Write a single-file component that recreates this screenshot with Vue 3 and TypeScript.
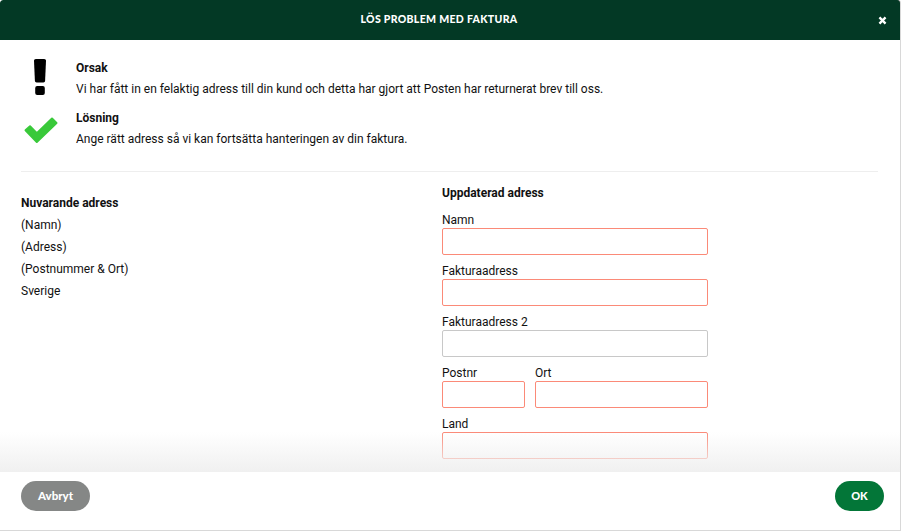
<script setup lang="ts">
const oldAddress = ['(Namn)', '(Adress)', '(Postnummer & Ort)', 'Sverige']
</script>

<template>
  <div class="modal">
    <header class="head">
      <h1>LÖS PROBLEM MED FAKTURA</h1>
      <svg class="close" viewBox="0 0 10 10" width="9" height="9"><path d="M1.6 1.6l6.8 6.8M8.4 1.6L1.6 8.4" stroke="#fff" stroke-width="2.6" fill="none" /></svg>
    </header>
    <main class="body">
      <section class="info">
        <div class="ico">
          <svg class="mark" viewBox="0 0 12 36" width="12" height="36"><path d="M1.8 0h8.4c1 0 1.8.8 1.8 1.8l-.9 20c-.1 1-.7 1.7-1.7 1.7H2.6c-1 0-1.6-.7-1.7-1.7L0 1.8C0 .8.8 0 1.8 0z" fill="#000" /><rect x="1.2" y="27" width="9.6" height="9" rx="2" fill="#000" /></svg>
        </div>
        <div>
          <b>Orsak</b>
          <p>Vi har fått in en felaktig adress till din kund och detta har gjort att Posten har returnerat brev till oss.</p>
        </div>
      </section>
      <section class="info second">
        <div class="ico">
          <svg class="tick" viewBox="0 0 34 27" width="34" height="27"><path d="M1.5 13.2 L12.8 25 L32.5 6 L28 1.5 L12.8 16.2 L6 9.2 Z" fill="#39c93a" stroke="#39c93a" stroke-width="2" stroke-linejoin="round" /></svg>
        </div>
        <div>
          <b>Lösning</b>
          <p>Ange rätt adress så vi kan fortsätta hanteringen av din faktura.</p>
        </div>
      </section>
      <hr />
      <div class="cols">
        <div class="current">
          <b>Nuvarande adress</b>
          <div v-for="line in oldAddress" :key="line" class="line">{{ line }}</div>
        </div>
        <form class="update">
          <b class="title">Uppdaterad adress</b>
          <label class="field"><span>Namn</span><input class="bad" /></label>
          <label class="field"><span>Fakturaadress</span><input class="bad" /></label>
          <label class="field"><span>Fakturaadress 2</span><input /></label>
          <div class="pair">
            <label class="field zip"><span>Postnr</span><input class="bad" /></label>
            <label class="field city"><span>Ort</span><input class="bad" /></label>
          </div>
          <label class="field"><span>Land</span><input class="bad" /></label>
        </form>
      </div>
      <div class="fade"></div>
    </main>
    <footer class="foot">
      <button type="button" class="btn cancel">Avbryt</button>
      <button type="button" class="btn ok">OK</button>
    </footer>
  </div>
</template>

<style>
html, body { margin: 0; background: #fff; }
</style>

<style scoped>
.modal {
  width: 900px;
  height: 530px;
  display: flex;
  flex-direction: column;
  border-right: 1px solid #d8d8d8;
  border-bottom: 1px solid #d8d8d8;
  border-top-left-radius: 3px;
  border-top-right-radius: 3px;
  font: 12px/14px Roboto, sans-serif;
  color: #111;
  overflow: hidden;
  background: linear-gradient(90deg, #fff 50%, #8c8c8c 50%);
}
.head {
  position: relative;
  height: 40px;
  flex: none;
  background: #033925;
  border-top-left-radius: 3px;
  border-top-right-radius: 3px;
  display: flex;
  align-items: center;
  justify-content: center;
}
.head h1 {
  margin: 0 22px 0 0;
  font: 900 10.5px/14px Lato, sans-serif;
  letter-spacing: 0.32px;
  color: #fff;
  transform: translateY(-1px);
}
.close { position: absolute; right: 13px; top: 16px; }
.body {
  position: relative;
  flex: 1;
  min-height: 0;
  overflow: hidden;
  padding: 21px 22px 0 21px;
  background: #fff;
}
.info { display: flex; height: 36px; }
.second { margin-top: 14px; }
.info > .ico { width: 38px; margin-right: 17px; flex: none; position: relative; }
.mark { display: block; margin: -2px 0 0 13px; }
.tick { display: block; margin: 6px 0 0 3px; }
b { font-weight: 700; display: block; }
p { margin: 7px 0 0; }
hr { border: 0; border-top: 1px solid #eee; margin: 24px 0 0; }
.cols { display: flex; }
.current { width: 421px; padding-top: 24px; }
.line { margin-top: 8px; }
.update { width: 266px; padding-top: 14px; }
.title { margin-bottom: 13px; }
.field { display: block; margin-bottom: 9px; }
.field span { display: block; height: 14px; }
input {
  display: block;
  box-sizing: border-box;
  width: 100%;
  height: 27px;
  margin: 1px 0 0;
  padding: 0 6px;
  border: 1px solid #c8c8c8;
  border-radius: 2px;
  background: #fff;
  outline: 0;
}
input.bad { border-color: #fb8a78; }
.pair { display: flex; gap: 10px; }
.zip { width: 83px; flex: none; }
.city { flex: 1; }
.fade {
  position: absolute;
  left: 0;
  right: 0;
  bottom: 0;
  height: 40px;
  background: linear-gradient(rgba(240, 240, 240, 0), #f0f0f0);
  pointer-events: none;
}
.foot {
  height: 58px;
  flex: none;
  box-sizing: border-box;
  padding: 9px 16px 0 21px;
  display: flex;
  justify-content: space-between;
  align-items: flex-start;
  background: #fff;
}
.btn {
  height: 30px;
  border: 0;
  border-radius: 15px;
  padding: 0;
  color: #fff;
  font: 900 11.5px/14px Lato, sans-serif;
}
.cancel { width: 69px; background: #858786; }
.ok { width: 49px; background: #037638; font-size: 11px; }
</style>
